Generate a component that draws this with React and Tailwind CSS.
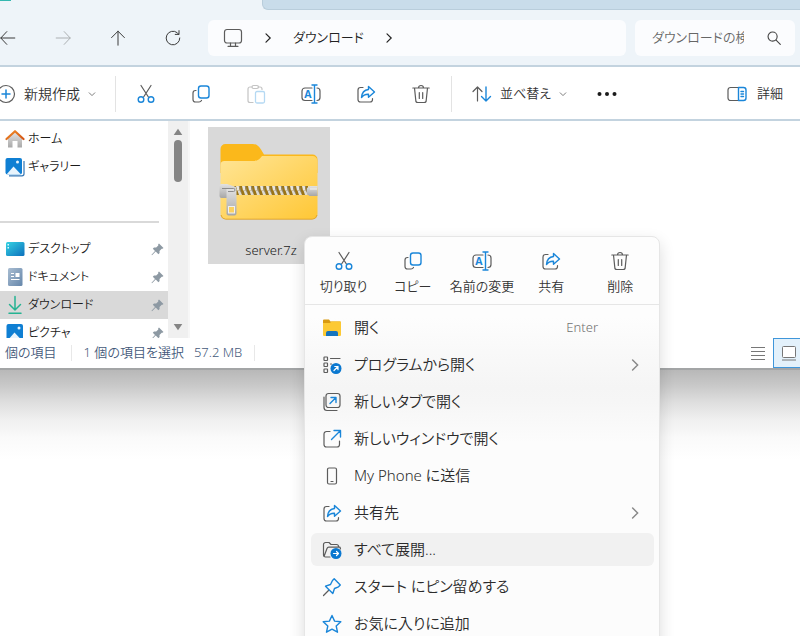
import React from "react";
import clsx from "clsx";

const BLUE = "#1a86d9";
const GRAY = "#5c5c5c";

const Icon = ({ size = 20, className, children }) => (
    <svg
        width={size}
        height={size}
        viewBox="0 0 20 20"
        fill="none"
        stroke={GRAY}
        strokeWidth="1.2"
        strokeLinecap="round"
        strokeLinejoin="round"
        aria-hidden="true"
        className={clsx("shrink-0", className)}
    >
        {children}
    </svg>
);

const CutIcon = () => (
    <Icon>
        <path d="M5 1.5 12.4 13M15 1.5 7.6 13" />
        <g stroke={BLUE} strokeWidth="1.4">
            <circle cx="5" cy="15.5" r="2.8" />
            <circle cx="15" cy="15.5" r="2.8" />
        </g>
    </Icon>
);

const CopyIcon = () => (
    <Icon>
        <path d="M5 6.5H4.5A2.5 2.5 0 0 0 2 9v6.5A2.5 2.5 0 0 0 4.5 18H8a3 3 0 0 0 2.5-1.5" />
        <rect x="7.5" y="2" width="10.5" height="12" rx="2.5" stroke={BLUE} strokeWidth="1.4" />
    </Icon>
);

const PasteIcon = () => (
    <Icon>
        <g stroke="#c4c4c4">
            <path d="M6 3H4a2 2 0 0 0-2 2v11.5a2 2 0 0 0 2 2h3M12 3h2a2 2 0 0 1 2 2v.5" />
            <rect x="6" y="1.5" width="6.5" height="3" rx="1.5" />
        </g>
        <rect x="9.5" y="7.5" width="9" height="11.5" rx="1.5" stroke="#b5d9f3" strokeWidth="1.3" />
    </Icon>
);

const RenameIcon = () => (
    <Icon>
        <path d="M11 4H4a3 3 0 0 0-3 3v6.5a3 3 0 0 0 3 3h7M16 4a3 3 0 0 1 3 3v6.5a3 3 0 0 1-3 3" />
        <path d="M13.5 1v18M11 1h5M11 19h5" stroke={BLUE} strokeWidth="1.4" />
        <text x="3.2" y="14" fontSize="10.5" fontWeight="700" fontFamily="Open Sans, sans-serif" fill={BLUE} stroke="none">A</text>
    </Icon>
);

const ShareIcon = () => (
    <Icon>
        <path d="M7 3.5H4.5A2.5 2.5 0 0 0 2 6v9.5A2.5 2.5 0 0 0 4.5 18H14a2.5 2.5 0 0 0 2.5-2.5v-1" />
        <path d="M12.5 2.5 18.5 8l-6 5.2v-3c-3.5-.2-5.5 1-7 3.3.3-4.5 2.5-7.5 7-8z" stroke={BLUE} strokeWidth="1.4" />
    </Icon>
);

const TrashIcon = () => (
    <Icon>
        <path d="M1.8 4h16.4M7.5 4a2.5 2.5 0 0 1 5 0M3.5 4l1.3 12.5A2 2 0 0 0 6.8 18.5h6.4a2 2 0 0 0 2-2L16.5 4M8.3 8.5v6M11.7 8.5v6" />
    </Icon>
);

const SortIcon = () => (
    <Icon>
        <path d="M5.5 17V3M1 7.5 5.5 3 10 7.5" />
        <path d="M14 3v14M9.5 12.5 14 17l4.5-4.5" stroke={BLUE} strokeWidth="1.4" />
    </Icon>
);

const DetailsIcon = () => (
    <Icon>
        <path d="M11.5 3.5H3.5a2.5 2.5 0 0 0-2.5 2.5v8a2.5 2.5 0 0 0 2.5 2.5h8" />
        <path d="M11.5 3.5h5A2.5 2.5 0 0 1 19 6v8a2.5 2.5 0 0 1-2.5 2.5h-5zM14 7.5h2.5M14 10h2.5M14 12.5h2.5" stroke={BLUE} strokeWidth="1.4" />
    </Icon>
);

const Chevron = ({ dir = "right", size = 10, color = "#444" }) => (
    <svg width={size} height={size} viewBox="0 0 10 10" fill="none" stroke={color} strokeWidth="1.2" strokeLinecap="round" aria-hidden="true" className="shrink-0">
        <path d={dir === "down" ? "M1.5 3.5 5 7l3.5-3.5" : "M3 .8 7.2 5 3 9.2"} />
    </svg>
);

const BackIcon = () => (
    <Icon size={16}><path d="M18.5 10H1M8.5 2 1 10l7.5 8" stroke="#333" /></Icon>
);
const ForwardIcon = () => (
    <Icon size={16}><path d="M1.5 10H19M11.5 2 19 10l-7.5 8" stroke="#a9adb0" /></Icon>
);
const UpIcon = () => (
    <Icon size={16}><path d="M10 19V1.5M2 9.5l8-8 8 8" stroke="#333" /></Icon>
);
const RefreshIcon = () => (
    <Icon size={16}><path d="M18.5 10a8.5 8.5 0 1 1-3.2-6.6L17 5.2M17.5.8V5.5H12.8" stroke="#333" /></Icon>
);

// Sidebar icons
const HomeIcon = () => (
    <svg width="20" height="20" viewBox="0 0 20 20" aria-hidden="true" className="shrink-0">
        <defs>
            <linearGradient id="wall" x1="0" y1="0" x2="0" y2="1">
                <stop offset="0" stopColor="#e4e4e4" />
                <stop offset="1" stopColor="#a9a9a9" />
            </linearGradient>
            <linearGradient id="roof" x1="0" y1="0" x2="1" y2="1">
                <stop offset="0" stopColor="#f08c28" />
                <stop offset="1" stopColor="#d45312" />
            </linearGradient>
        </defs>
        <path d="M3 9 10 3l7 6v9.5h-4.5V12h-5v6.5H3z" fill="url(#wall)" />
        <path d="M1.5 10 10 2.2 18.5 10" fill="none" stroke="url(#roof)" strokeWidth="2.2" strokeLinecap="round" strokeLinejoin="round" />
    </svg>
);

const PhotoIcon = ({ stacked }) => (
    <svg width="20" height="20" viewBox="0 0 20 20" aria-hidden="true" className="shrink-0">
        {stacked && <path d="M4 18.8h13a2 2 0 0 0 2-2V4" fill="none" stroke="#3577b5" strokeWidth="1.2" />}
        <rect x={stacked ? 0.5 : 1.5} y="1" width="16.5" height="16.5" rx="2" fill="#0f7fd3" />
        <path d={stacked ? "M1.5 17.5 8.5 9.5l7.5 8z" : "M2.5 17.5 9.5 9.5l7.5 8z"} fill="#e8f4fd" />
        <circle cx={stacked ? 12.5 : 14} cy="5" r="1.5" fill="#e8f4fd" />
    </svg>
);

const DesktopIcon = () => (
    <svg width="20" height="20" viewBox="0 0 20 20" aria-hidden="true" className="shrink-0">
        <defs>
            <linearGradient id="desk" x1="0" y1="0" x2="1" y2="1">
                <stop offset="0" stopColor="#35d2e2" />
                <stop offset="1" stopColor="#0c70bd" />
            </linearGradient>
        </defs>
        <rect x="1" y="3" width="18.5" height="14" rx="1.5" fill="url(#desk)" />
        <path d="M2.5 5H4v1.5H2.5zM2.5 8H4v1.5H2.5z" fill="#d9fbff" />
    </svg>
);

const DocumentIcon = () => (
    <svg width="20" height="20" viewBox="0 0 20 20" aria-hidden="true" className="shrink-0">
        <defs>
            <linearGradient id="doc" x1="0" y1="0" x2="1" y2="1">
                <stop offset="0" stopColor="#a9bdd2" />
                <stop offset="1" stopColor="#6586aa" />
            </linearGradient>
        </defs>
        <rect x="3" y="1" width="14.5" height="18" rx="1.5" fill="url(#doc)" />
        <path d="M6 6.5h3M6 9.5h3M6 12.5h8.5" stroke="#fff" strokeWidth="1.2" />
        <rect x="10.5" y="6" width="4" height="4" fill="#fff" />
    </svg>
);

const DownloadIcon = () => (
    <svg width="20" height="20" viewBox="0 0 20 20" fill="none" stroke="#25b392" strokeWidth="1.5" strokeLinecap="round" strokeLinejoin="round" aria-hidden="true" className="shrink-0">
        <path d="M10 1.5v13M4.5 9.5l5.5 5.5 5.5-5.5M4 18.3h12" />
    </svg>
);

const PinnedIcon = () => (
    <svg width="13" height="13" viewBox="0 0 13 13" aria-hidden="true" className="ml-auto shrink-0">
        <path d="M8 .5 12.5 5l-1 .8-.8-.1-2.2 2.2.1 2.1-1.2 1.2-2.700-2.700L1 12.300l-.5-.5L4 8 1.800 5.800 3 4.500l2.200.1L7.300 2.400 7.200 1.300z" fill="#8d99a3" />
    </svg>
);

const ZipFolder = () => (
    <svg width="100" height="78" viewBox="0 0 100 78" aria-hidden="true">
        <defs>
            <linearGradient id="front" x1="0" y1="0" x2="1" y2="1">
                <stop offset="0" stopColor="#ffe596" />
                <stop offset="1" stopColor="#ffc735" />
            </linearGradient>
            <linearGradient id="metal" x1="0" y1="0" x2="0" y2="1">
                <stop offset="0" stopColor="#e2e2e2" />
                <stop offset="1" stopColor="#a6a6a6" />
            </linearGradient>
            <pattern id="teeth" x="17" y="43" width="6" height="9" patternUnits="userSpaceOnUse">
                <rect width="6" height="9" fill="#9a7416" />
                <path d="M0 0h2.800l.8 4.500H1z" fill="#e9e6df" />
                <path d="M1.500 4.500h2.600L6 9H3z" fill="#dedbd2" />
                <path d="M2.800 0h.9l2 7.500-.9-1z" fill="#8f8c84" />
            </pattern>
        </defs>
        <path d="M1.5 24V6a5 5 0 0 1 5-5h27c4 0 6 2 8.5 5.5L45 11.5h48.5a5 5 0 0 1 5 5V30h-97z" fill="#fbb81b" />
        <path d="M1.5 22a4 4 0 0 1 4-4H34c4 0 6-1 9-5h50.5a5 5 0 0 1 5 5v53a5 5 0 0 1-5 5h-87a5 5 0 0 1-5-5z" fill="url(#front)" />
        <path d="M2 72a5 5 0 0 0 4.5 4.200h87A5 5 0 0 0 98 72" fill="none" stroke="#e3a62a" />
        <rect x="15" y="43" width="75" height="9" fill="url(#teeth)" />
        <path d="M88 45l3-2h7.500v10H90.500l-2.500-2z" fill="url(#metal)" />
        <path d="M91 46h7" stroke="#f4f4f4" />
        <path d="M.5 43a2 2 0 0 1 2-2H8l9 3v8l-9 3H2.500a2 2 0 0 1-2-2z" fill="url(#metal)" />
        <path d="M7.500 46h10v24.500a2 2 0 0 1-2 2h-6a2 2 0 0 1-2-2z" fill="url(#metal)" />
        <path d="M3 45.500h11.500a1.500 1.500 0 0 1 0 3H9" fill="none" stroke="#8c8c8c" />
        <rect x="9.500" y="63.500" width="6" height="6.500" fill="#fbd160" stroke="#f1f1f1" />
    </svg>
);

// Context menu icons
const FolderIcon = () => (
    <svg width="20" height="20" viewBox="0 0 20 20" aria-hidden="true" className="shrink-0">
        <path d="M1 2.500a1 1 0 0 1 1-1h5l1.500 2H18a1 1 0 0 1 1 1V8H1z" fill="#d99a11" />
        <path d="M1 5h7l1.500-1.500H18a1 1 0 0 1 1 1V17a1 1 0 0 1-1 1H2a1 1 0 0 1-1-1z" fill="#fcc934" />
        <path d="M4 18v-3a2 2 0 0 1 2-2h8a2 2 0 0 1 2 2v3z" fill="#1473bd" />
    </svg>
);

const OpenWithIcon = () => (
    <Icon>
        <rect x="2" y="2" width="3.500" height="3.500" rx=".5" />
        <rect x="2" y="8" width="3.500" height="3.500" rx=".5" />
        <rect x="2" y="14" width="3.500" height="3.500" rx=".5" />
        <path d="M8.500 3.500H18M8.500 9h1" />
        <circle cx="14" cy="13.500" r="5.500" fill="#0a78d0" stroke="none" />
        <path d="m12 15.500 4-4M12.800 11.500H16v3.200" stroke="#fff" />
    </Icon>
);

const NewTabIcon = () => (
    <Icon>
        <rect x="4" y="1.500" width="14" height="14" rx="2.500" />
        <path d="M2 5v10.500a3 3 0 0 0 3 3h10" />
        <path d="m8 11.500 6-6M9 5.500h5v5" stroke={BLUE} strokeWidth="1.4" />
    </Icon>
);

const NewWindowIcon = () => (
    <Icon>
        <path d="M8 2.500H4.500A2.500 2.500 0 0 0 2 5v10.500A2.500 2.500 0 0 0 4.500 18H15a2.500 2.500 0 0 0 2.500-2.500V12" />
        <path d="m9.500 10.500 9-9M12 1.500h6.500V8" stroke={BLUE} strokeWidth="1.4" />
    </Icon>
);

const PhoneIcon = () => (
    <Icon>
        <rect x="5.500" y="2" width="9" height="16" rx="1.500" />
        <path d="M9 15.500h2" />
    </Icon>
);

const ExtractIcon = () => (
    <Icon>
        <path d="M8 17H3.500a2 2 0 0 1-2-2V4.500a2 2 0 0 1 2-2H7l2 2h5.500a2 2 0 0 1 2 2V7M2 16.500 5 8.500a2 2 0 0 1 1.800-1.300H18L18.500 9" />
        <circle cx="14" cy="13.500" r="5.500" fill="#0a78d0" stroke="none" />
        <path d="M11.500 13.500h5M14.500 11.500l2 2-2 2" stroke="#fff" />
    </Icon>
);

const PinIcon = () => (
    <Icon>
        <path d="m1.500 18.500 5-5" />
        <path d="M12.200 1.800 18.300 8l-1.800 1.800-4 1.700-1.700 5L3.500 9.200l5-1.700 2-4z" stroke={BLUE} strokeWidth="1.4" />
    </Icon>
);

const StarIcon = () => (
    <Icon>
        <path d="m10 1.500 2.600 5.600 6.200.7-4.600 4.200 1.300 6.200L10 15.100l-5.500 3.100L5.800 12 1.200 7.800l6.200-.7z" stroke={BLUE} strokeWidth="1.4" />
    </Icon>
);

const toolButtons = [
    { name: "切り取り", icon: <CutIcon /> },
    { name: "コピー", icon: <CopyIcon /> },
    { name: "貼り付け", icon: <PasteIcon />, disabled: true },
    { name: "名前の変更", icon: <RenameIcon /> },
    { name: "共有", icon: <ShareIcon /> },
    { name: "削除", icon: <TrashIcon /> },
];

const pinnedFolders = [
    { name: "デスクトップ", icon: <DesktopIcon /> },
    { name: "ドキュメント", icon: <DocumentIcon /> },
    { name: "ダウンロード", icon: <DownloadIcon />, active: true },
    { name: "ピクチャ", icon: <PhotoIcon /> },
];

const quickActions = toolButtons.filter((b) => !b.disabled);

const menuItems = [
    { name: "開く", icon: <FolderIcon />, shortcut: "Enter" },
    { name: "プログラムから開く", icon: <OpenWithIcon />, submenu: true },
    { name: "新しいタブで開く", icon: <NewTabIcon /> },
    { name: "新しいウィンドウで開く", icon: <NewWindowIcon /> },
    { name: "My Phone に送信", icon: <PhoneIcon /> },
    { name: "共有先", icon: <ShareIcon />, submenu: true },
    { name: "すべて展開...", icon: <ExtractIcon />, active: true },
    { name: "スタート にピン留めする", icon: <PinIcon /> },
    { name: "お気に入りに追加", icon: <StarIcon /> },
];

const SidebarItem = ({ item, pinned }) => (
    <button
        className={clsx(
            "flex h-7 w-full shrink-0 items-center gap-[3px] pr-1 pl-[5px] text-xs leading-3 text-[#1b1b1b]",
            item.active && "bg-[#d9d9d9]"
        )}
    >
        {item.icon}
        <span>{item.name}</span>
        {pinned && <PinnedIcon />}
    </button>
);

const AddressBar = () => (
    <div className="flex h-[55px] items-center bg-[#eef4f9] pr-[5px]">
        <div className="flex items-center gap-[39px]">
            <button aria-label="戻る"><BackIcon /></button>
            <button aria-label="進む"><ForwardIcon /></button>
            <button aria-label="上へ"><UpIcon /></button>
            <button aria-label="最新の情報に更新"><RefreshIcon /></button>
        </div>
        <nav className="ml-[27px] flex h-9 flex-1 items-center rounded-md bg-[#fbfcfe] pl-[15px] text-[13px] text-[#222]">
            <Icon className="mr-5">
                <rect x="1.500" y="1.500" width="17" height="13.500" rx="2.500" />
                <path d="M7.500 15v3M12.500 15v3M5 18.300h10" />
            </Icon>
            <Chevron color="#222" />
            <button className="mr-5 ml-5">ダウンロード</button>
            <Chevron color="#222" />
        </nav>
        <div className="ml-[9px] flex h-9 w-40 items-center rounded-md bg-[#fbfcfe] pr-[14px] pl-[17px]">
            <input
                type="text"
                aria-label="検索"
                placeholder="ダウンロードの検索"
                className="w-[92px] bg-transparent text-[13px] outline-none placeholder:text-[#666]"
            />
            <Icon size={14} className="ml-auto">
                <circle cx="8" cy="8" r="6.500" stroke="#444" strokeWidth="1.600" />
                <path d="m13 13 6 6" stroke="#444" strokeWidth="1.600" />
            </Icon>
        </div>
    </div>
);

const Toolbar = () => (
    <div className="flex h-14 items-center border-y-2 border-[#c3d3df] bg-white pt-[2px] pr-[17px] text-[13px] text-[#333]">
        <button className="-ml-1 flex items-center gap-2 text-sm">
            <Icon>
                <circle cx="10" cy="10" r="8.500" />
                <path d="M10 6v8M6 10h8" stroke={BLUE} strokeWidth="1.500" />
            </Icon>
            新規作成
            <Chevron dir="down" size={8} color="#777" />
        </button>
        <div className="mr-5 ml-[19px] h-9 w-px bg-[#e3e3e3]" />
        <div className="flex items-center gap-[35px]">
            {toolButtons.map((tool) => (
                <button key={tool.name} aria-label={tool.name} disabled={tool.disabled}>{tool.icon}</button>
            ))}
        </div>
        <div className="mx-5 h-9 w-px bg-[#e3e3e3]" />
        <button className="flex items-center gap-2">
            <SortIcon />
            並べ替え
            <Chevron dir="down" size={8} color="#777" />
        </button>
        <button aria-label="もっと見る" className="ml-[30px]">
            <svg width="20" height="20" viewBox="0 0 20 20" fill="#1b1b1b" aria-hidden="true">
                <circle cx="2.500" cy="10" r="2" />
                <circle cx="10" cy="10" r="2" />
                <circle cx="17.500" cy="10" r="2" />
            </svg>
        </button>
        <button className="ml-auto flex items-center gap-[10px]">
            <DetailsIcon />
            詳細
        </button>
    </div>
);

const Scrollbar = () => (
    <div className="flex w-5 shrink-0 flex-col items-center bg-[#f0f0f0] py-[7px]">
        <svg width="10" height="8" viewBox="0 0 10 8" fill="#858585" aria-hidden="true"><path d="M5 .8 9.300 7H.7z" /></svg>
        <div className="mt-1 h-[42px] w-2 rounded-full bg-[#858585]" />
        <svg width="10" height="8" viewBox="0 0 10 8" fill="#858585" aria-hidden="true" className="mt-auto"><path d="M5 7.200.7 1h8.600z" /></svg>
    </div>
);

const StatusBar = () => (
    <footer className="flex h-8 items-center border-b-2 border-[#a3a5a6] bg-white pl-[5px] text-[13px] text-[#44597a]">
        <span>個の項目</span>
        <div className="mr-3 ml-[14px] h-4 w-px bg-[#e8e8e8]" />
        <span>1 個の項目を選択</span>
        <span className="ml-[10px]">57.2 MB</span>
        <div className="ml-3 h-4 w-px bg-[#e8e8e8]" />
        <div className="ml-auto flex items-center">
            <button aria-label="詳細表示" className="mr-2">
                <svg width="14" height="14" viewBox="0 0 14 14" stroke="#777" aria-hidden="true"><path d="M0 1.500h14M0 5.500h14M0 9.500h14M0 13.500h14" /></svg>
            </button>
            <button aria-label="大きい縮小版" className="flex h-[30px] w-[27px] items-center justify-end overflow-hidden border border-r-0 border-[#3f96da] bg-[#e3f1fb] pr-1">
                <svg width="14" height="16" viewBox="0 0 14 16" fill="none" stroke="#777" aria-hidden="true">
                    <rect x=".5" y="1.500" width="13" height="11" rx="1" fill="#fff" />
                    <path d="M0 15h14" />
                </svg>
            </button>
        </div>
    </footer>
);

const ContextMenu = () => (
    <div
        role="menu"
        className="absolute top-[236px] left-[304px] w-[356px] rounded-t-lg border border-[#e6e6e6] bg-[#fcfcfc] bg-[linear-gradient(#fdfdfd_80px,#f5f5f5_150px,#f6f6f6_165px,#fcfcfc_205px)] pb-4 shadow-[0_6px_16px_rgba(0,0,0,0.14)]"
    >
        <div className="flex h-[68px] justify-around border-b border-[#e6e6e6] px-1 pt-[14px]">
            {quickActions.map((action) => (
                <button key={action.name} role="menuitem" className="flex w-[69px] flex-col items-center gap-[6px] text-[13px] leading-[18px] whitespace-nowrap text-[#333]">
                    {action.icon}
                    {action.name}
                </button>
            ))}
        </div>
        <div className="flex flex-col gap-1 pt-[6px] pr-[5px] pl-[6px]">
            {menuItems.map((item) => (
                <button
                    key={item.name}
                    role="menuitem"
                    className={clsx(
                        "flex h-[33px] items-center rounded-md pr-[13px] pl-[11px] text-[15px] text-[#2b2b2b]",
                        item.active && "bg-[#f1f1f1]"
                    )}
                >
                    {item.icon}
                    <span className="ml-3">{item.name}</span>
                    {item.shortcut && <span className="mr-[43px] ml-auto text-[13px] text-[#707070]">{item.shortcut}</span>}
                    {item.submenu && <span className="ml-auto"><Chevron size={12} color="#888" /></span>}
                </button>
            ))}
        </div>
    </div>
);

const App = () => {
    return (
        <div className="relative h-screen overflow-hidden bg-white font-['Noto_Sans','Noto_Sans_CJK_JP',sans-serif] font-[350] [font-feature-settings:'palt','kern']">
            <div className="flex flex-col">
                {/* Tab strip */}
                <div className="flex h-[10px] bg-[#eef4f9]">
                    <div className="h-px w-[11px] bg-[#35b8b0]" />
                    <div className="ml-[251px] flex-1 rounded-bl-md border-b border-l border-[#b9cddb] bg-[#c9dcea]" />
                </div>
                <AddressBar />
                <Toolbar />

                <div className="flex h-[217px] bg-white">
                    <aside className="flex w-[168px] shrink-0 flex-col overflow-hidden pt-1">
                        <SidebarItem item={{ name: "ホーム", icon: <HomeIcon /> }} />
                        <SidebarItem item={{ name: "ギャラリー", icon: <PhotoIcon stacked /> }} />
                        <div className="mt-10 mr-[9px] mb-3 h-[2px] shrink-0 bg-[#d9d9d9]" />
                        {pinnedFolders.map((folder) => (
                            <SidebarItem key={folder.name} item={folder} pinned />
                        ))}
                    </aside>
                    <Scrollbar />
                    <main className="flex-1 border-l-2 border-[#f7f7f7] pt-[6px] pl-[18px]">
                        <button className="flex h-[137px] w-[122px] flex-col items-center bg-[#d9d9d9] pt-4 text-[#1b1b1b]">
                            <ZipFolder />
                            <span className="mt-5 pl-1 text-[13px]">server.7z</span>
                        </button>
                    </main>
                </div>
                <StatusBar />
                {/* Window drop shadow on the desktop */}
                <div className="h-[90px] bg-[linear-gradient(#b8b8b8,#c8c8c8_15px,#dedede_32px,#f0f0f0_50px,#fafafa_68px,#ffffff)]" />
            </div>
            <ContextMenu />
        </div>
    );
};

export default App;
